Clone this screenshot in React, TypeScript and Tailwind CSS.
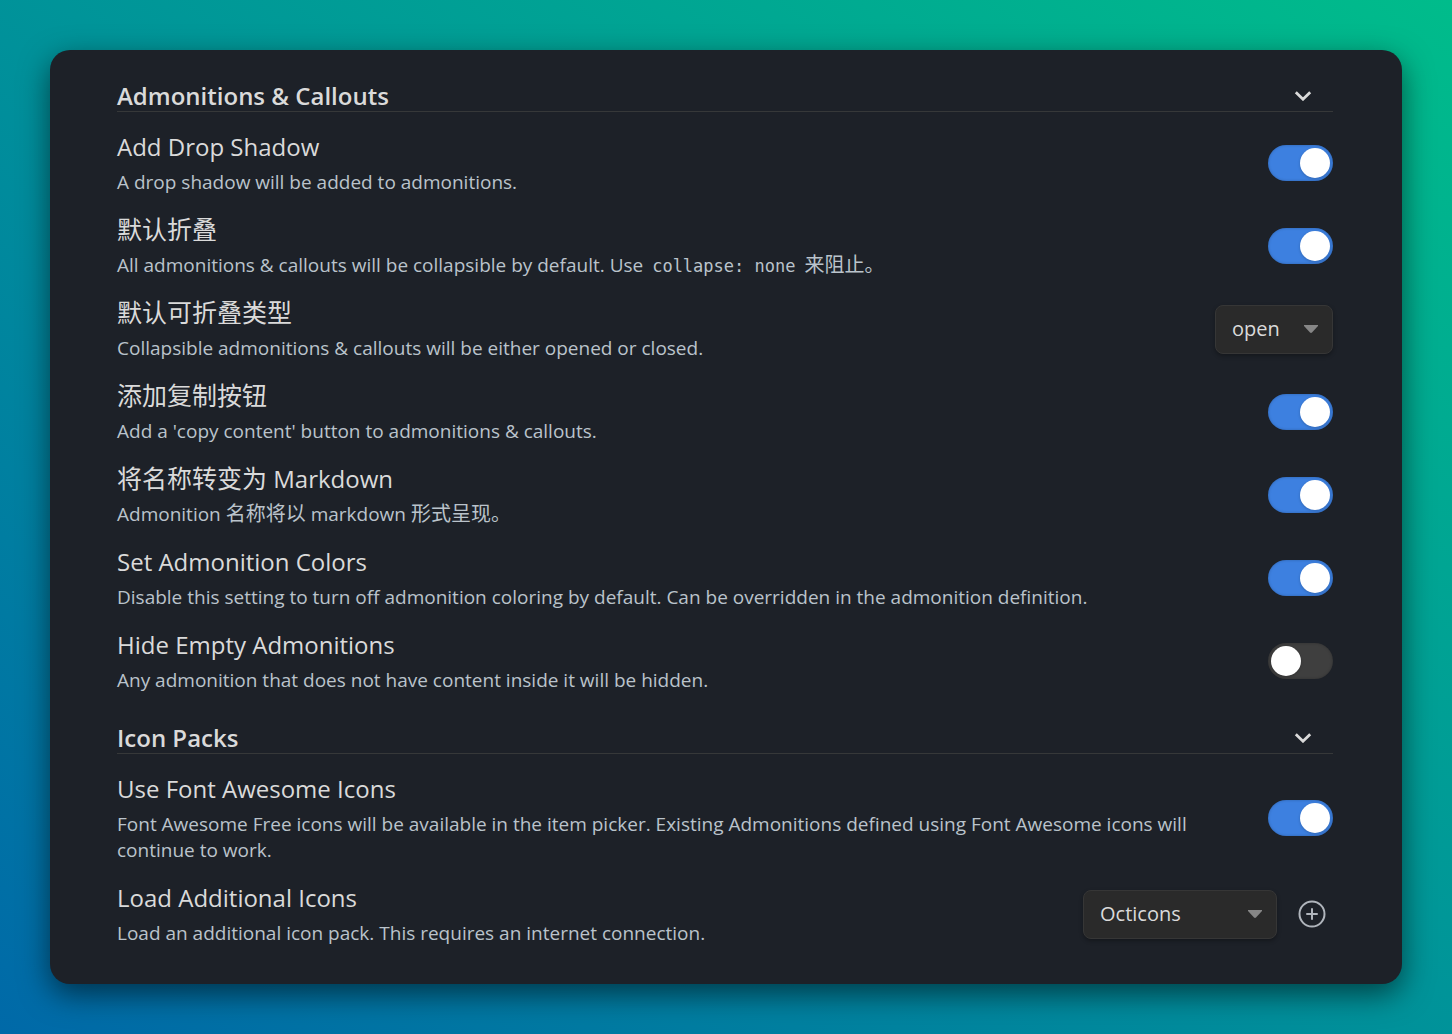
import type { ReactNode } from 'react';
import { CirclePlus } from 'lucide-react';

type SettingProps = {
  id: string;
  name: ReactNode;
  desc: ReactNode;
  children: ReactNode;
};

const Cn = ({ children }: { children: ReactNode }) => (
  <span lang="zh-CN" className="text-[20px] leading-none">
    {children}
  </span>
);

const CnTitle = ({ children }: { children: ReactNode }) => (
  <span lang="zh-CN" className="text-[25px] leading-none">
    {children}
  </span>
);

const Setting = ({ id, name, desc, children }: SettingProps) => {
  return (
    <div className="flex items-center justify-between gap-12 pt-[9px] pb-[10px]">
      <div className="min-w-0 flex-1">
        <label htmlFor={id} className="block text-[24px] leading-[32px] text-[#dadada]">
          {name}
        </label>
        <p className="mt-1.5 text-[19px] leading-[26px] text-[#bac3cb]">{desc}</p>
      </div>
      <div className="flex shrink-0 items-center">{children}</div>
    </div>
  );
};

const Toggle = ({ id, on = true }: { id: string; on?: boolean }) => {
  return (
    <input
      id={id}
      type="checkbox"
      defaultChecked={on}
      className="block h-9 w-[65px] cursor-pointer appearance-none rounded-full bg-[#3f3f3f] p-[3px] shadow-[inset_0_0_3px_rgba(0,0,0,0.25)] before:block before:size-[30px] before:rounded-full before:bg-white before:shadow-[0_1px_3px_rgba(0,0,0,0.2)] checked:bg-[#3d80e0] checked:before:translate-x-[29px]"
    />
  );
};

const Dropdown = ({ id, options, width }: { id: string; options: string[]; width: string }) => {
  return (
    <div className={`relative ${width}`}>
      <select
        id={id}
        className="block h-[49px] w-full appearance-none rounded-lg border border-[#363636] bg-[#2a2a2a] pr-10 pl-4 text-[20px] text-[#dadada] shadow-[0_2px_4px_rgba(0,0,0,0.3)]"
      >
        {options.map((option) => (
          <option key={option}>{option}</option>
        ))}
      </select>
      <svg
        className="pointer-events-none absolute top-5 right-[15px] h-2 w-[14px]"
        viewBox="0 0 14 8"
        aria-hidden="true"
      >
        <path d="M0 0h14v1L8 7.500Q7 8.300 6 7.500L0 1z" fill="#868686" />
      </svg>
    </div>
  );
};

const Section = ({ title, children }: { title: string; children: ReactNode }) => {
  return (
    <details open>
      <summary className="mb-[10px] flex h-8 cursor-pointer list-none items-center justify-between border-b border-[#363839] pr-[21px]">
        <h2 className="text-[24px] leading-[32px] font-semibold text-[#dadada]">{title}</h2>
        <svg className="h-[10px] w-[18px]" viewBox="0 0 18 10" fill="none" aria-hidden="true">
          <path d="M1.800 1.200L9 8.200l7.200-7" stroke="#dadada" strokeWidth="2.800" />
        </svg>
      </summary>
      {children}
    </details>
  );
};

const App = () => {
  return (
    <div className="min-h-screen bg-[linear-gradient(to_top_right,#0069a8,#00bc8b)] p-[50px] font-['Open_Sans','Noto_Sans_CJK_SC',sans-serif]">
      <main className="flex flex-col gap-[19px] rounded-[20px] bg-[#1d2128] pt-[30px] pr-[69px] pb-7 pl-[67px] shadow-[0_10px_30px_rgba(0,0,0,0.55)]">
        <Section title="Admonitions & Callouts">
          <Setting
            id="shadow"
            name="Add Drop Shadow"
            desc="A drop shadow will be added to admonitions."
          >
            <Toggle id="shadow" />
          </Setting>
          <Setting
            id="collapse"
            name={<CnTitle>默认折叠</CnTitle>}
            desc={
              <>
                All admonitions &amp; callouts will be collapsible by default. Use{' '}
                <code className="px-1 font-['DejaVu_Sans_Mono',monospace] text-[17px] leading-none">
                  collapse: none
                </code>{' '}
                <Cn>来阻止。</Cn>
              </>
            }
          >
            <Toggle id="collapse" />
          </Setting>
          <Setting
            id="collapse-type"
            name={<CnTitle>默认可折叠类型</CnTitle>}
            desc="Collapsible admonitions & callouts will be either opened or closed."
          >
            <Dropdown id="collapse-type" options={['open', 'closed']} width="w-[118px]" />
          </Setting>
          <Setting
            id="copy"
            name={<CnTitle>添加复制按钮</CnTitle>}
            desc="Add a 'copy content' button to admonitions & callouts."
          >
            <Toggle id="copy" />
          </Setting>
          <Setting
            id="markdown"
            name={
              <>
                <CnTitle>将名称转变为</CnTitle> Markdown
              </>
            }
            desc={
              <>
                Admonition <Cn>名称将以</Cn> markdown <Cn>形式呈现。</Cn>
              </>
            }
          >
            <Toggle id="markdown" />
          </Setting>
          <Setting
            id="colors"
            name="Set Admonition Colors"
            desc="Disable this setting to turn off admonition coloring by default. Can be overridden in the admonition definition."
          >
            <Toggle id="colors" />
          </Setting>
          <Setting
            id="hide-empty"
            name="Hide Empty Admonitions"
            desc="Any admonition that does not have content inside it will be hidden."
          >
            <Toggle id="hide-empty" on={false} />
          </Setting>
        </Section>

        <Section title="Icon Packs">
          <Setting
            id="font-awesome"
            name="Use Font Awesome Icons"
            desc="Font Awesome Free icons will be available in the item picker. Existing Admonitions defined using Font Awesome icons will continue to work."
          >
            <Toggle id="font-awesome" />
          </Setting>
          <Setting
            id="icon-pack"
            name="Load Additional Icons"
            desc="Load an additional icon pack. This requires an internet connection."
          >
            <Dropdown id="icon-pack" options={['Octicons', 'RPG Awesome']} width="w-[194px]" />
            <button
              type="button"
              aria-label="Load icon pack"
              className="ml-[14px] flex w-[42px] cursor-pointer justify-center text-[#b0b5bc]"
            >
              <CirclePlus size={30} strokeWidth={1.6} />
            </button>
          </Setting>
        </Section>
      </main>
    </div>
  );
};

export default App;
